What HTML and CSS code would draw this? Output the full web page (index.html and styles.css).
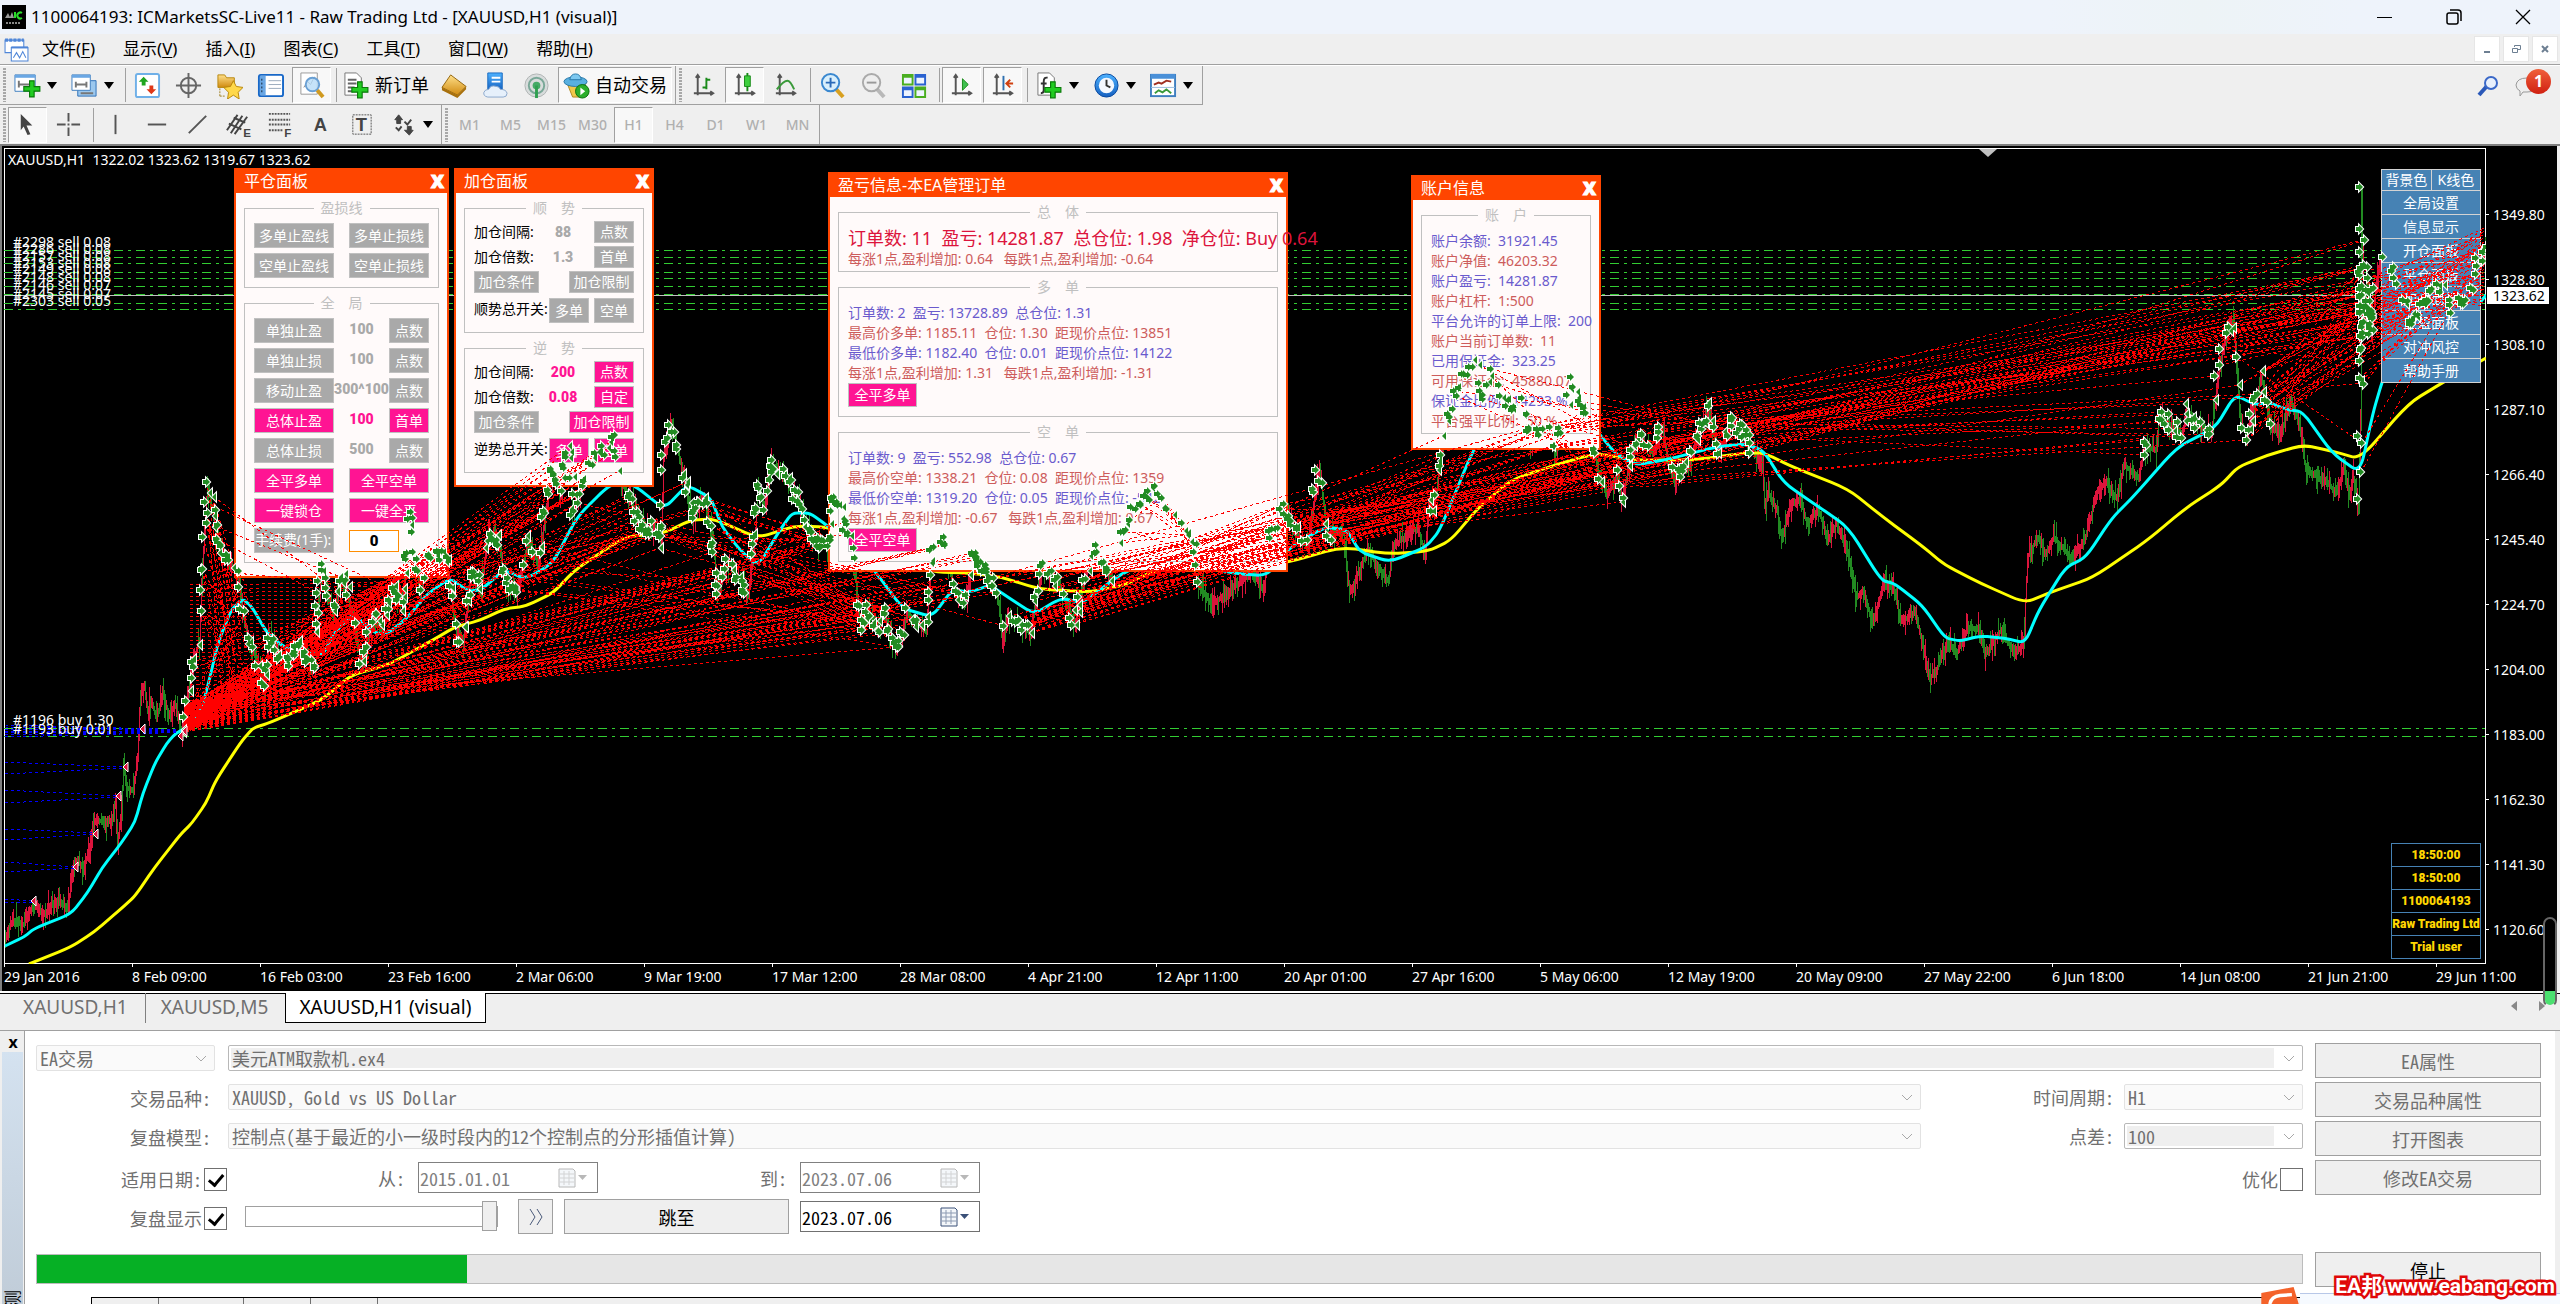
FILE: index.html
```html
<!DOCTYPE html>
<html lang="zh-CN">
<head>
<meta charset="utf-8">
<title>1100064193: ICMarketsSC-Live11 - Raw Trading Ltd</title>
<link rel="stylesheet" href="styles.css">
</head>
<body>
<svg class="defs" width="0" height="0" aria-hidden="true">
  <defs>
    <linearGradient id="gold" x1="0" y1="0" x2="0" y2="1"><stop offset="0" stop-color="#ffe08a"/><stop offset="1" stop-color="#d08a10"/></linearGradient>
    <linearGradient id="blue" x1="0" y1="0" x2="0" y2="1"><stop offset="0" stop-color="#4db2ff"/><stop offset="1" stop-color="#1560c0"/></linearGradient>
    <symbol id="plus" viewBox="0 0 16 16"><path d="M6 1h4v5h5v4h-5v5H6v-5H1V6h5z" fill="#22cc22" stroke="#0a7a0a"/></symbol>
    <symbol id="axes" viewBox="0 0 26 28"><path d="M7 3v21M3 22h20M5 6l2-3 2 3M20 20l3 2-3 2" fill="none" stroke="#555" stroke-width="2"/></symbol>
    <symbol id="chev" viewBox="0 0 12 8"><path d="M1 1l5 5 5-5" fill="none" stroke="#a8a8a8"/></symbol>
    <symbol id="cal" viewBox="0 0 32 20"><path d="M2 1h14l2 2v16H2z" fill="#f4f7fa" stroke="currentColor"/><path d="M3 6h14M3 10h14M3 14h14M7 3v14M12 3v14" stroke="currentColor" opacity=".55"/><path d="M21 7h9l-4.500 5z" fill="currentColor"/></symbol>
  </defs>
</svg>
<div class="app">
  <header class="titlebar">
    <svg class="logo" viewBox="0 0 24 24"><rect width="24" height="24" fill="#000"/><path d="M3 13l3-5 2 4 2-5 2 6z" fill="#999"/><path d="M13 7v6M20 8a3 3 0 1 0 0 5" stroke="#2bdc2b" stroke-width="2" fill="none"/><path d="M4 18h15" stroke="#888" stroke-width="2" stroke-dasharray="2 1"/></svg>
    <h1>1100064193: ICMarketsSC-Live11 - Raw Trading Ltd - [XAUUSD,H1 (visual)]</h1>
    <div class="winbtns">
      <button aria-label="最小化"><svg width="16" height="16"><path d="M0 8.500h15" stroke="#000"/></svg></button>
      <button aria-label="还原"><svg width="16" height="16" fill="none" stroke="#000" stroke-width="1.500"><rect x="1" y="4" width="11" height="11" rx="2"/><path d="M4 1h8q3 0 3 3v8"/></svg></button>
      <button aria-label="关闭"><svg width="16" height="16"><path d="M1 1l14 14M15 1L1 15" stroke="#000" stroke-width="1.300"/></svg></button>
    </div>
  </header>
  <nav class="menubar">
    <svg class="docicon" viewBox="0 0 24 24" fill="none" stroke="#4f86d8"><path d="M1 3h18v12H1z" fill="#fff"/><path d="M1 3h18" stroke-width="3" stroke-dasharray="3 1"/><path d="M7 10h16v13H7z" fill="#fff"/><path d="M7 10h16" stroke-width="2"/><path d="M9 20l3-5 3 5 3-6 3 6"/></svg>
    <a href="#">文件(<u>F</u>)</a><a href="#">显示(<u>V</u>)</a><a href="#">插入(<u>I</u>)</a><a href="#">图表(<u>C</u>)</a><a href="#">工具(<u>T</u>)</a><a href="#">窗口(<u>W</u>)</a><a href="#">帮助(<u>H</u>)</a>
    <div class="mdi">
      <button aria-label="最小化子窗口"><svg width="12" height="12"><path d="M3 9h6" stroke="#6d7f92" stroke-width="2"/></svg></button>
      <button aria-label="还原子窗口"><svg width="12" height="12" fill="none" stroke="#6d7f92"><path d="M4.500 4V2.500h6v4H8M2.500 5.500h5v4h-5z"/></svg></button>
      <button aria-label="关闭子窗口"><svg width="12" height="12"><path d="M3 3l6 6M9 3L3 9" stroke="#6d7f92" stroke-width="2"/></svg></button>
    </div>
  </nav>
  <div class="toolrow">
    <div class="toolbar">
      <i class="grip"></i>
      <button class="tb drop" aria-label="新图表"><svg viewBox="0 0 28 28"><path d="M1 3h21v17H1z" fill="#fff" stroke="#3f7fc0"/><path d="M1 3h21v3H1z" fill="#6aa7e4"/><path d="M5 9v7M5 13h12" stroke="#777" stroke-width="2"/><use href="#plus" x="9" y="8" width="19" height="19"/></svg></button>
      <button class="tb drop" aria-label="窗口"><svg viewBox="0 0 28 28"><path d="M7 9h19v16H7z" fill="#9cc8ee" stroke="#2f70b8"/><path d="M1 3h19v16H1z" fill="#fff" stroke="#3f7fc0"/><path d="M1 3h19v3H1z" fill="#6aa7e4"/><path d="M4 13h13M5 10v6M16 10v6M10 22h13" stroke="#777" stroke-width="2"/></svg></button>
      <i class="sep"></i>
      <button class="tb" aria-label="市场报价"><svg viewBox="0 0 28 28"><rect x="2" y="2" width="24" height="24" rx="2" fill="#fff" stroke="#6fb0e8" stroke-width="2"/><path d="M10 5l5 5h-3v4H8v-4H5z" fill="#1fa51f"/><path d="M18 23l5-5h-3v-4h-4v4h-3z" fill="#e03818"/></svg></button>
      <button class="tb" aria-label="准星"><svg viewBox="0 0 28 28" fill="none" stroke="#666" stroke-width="2"><circle cx="14" cy="14" r="8"/><path d="M14 1v26M1 14h26"/></svg></button>
      <button class="tb" aria-label="导航"><svg viewBox="0 0 28 28"><path d="M2 3h7l2 3h8v10H2z" fill="url(#gold)" stroke="#b8860b"/><path d="M4 17v8M4 25h6" stroke="#a08020" stroke-dasharray="2 1"/><path d="M18 9l3 6 7 1-5 5 1 7-6-4-6 4 1-7-5-5 7-1z" fill="#ffd84a" stroke="#b8860b"/></svg></button>
      <button class="tb" aria-label="终端"><svg viewBox="0 0 28 28"><rect x="2" y="3" width="25" height="22" rx="2" fill="#fff" stroke="#1868c8" stroke-width="2"/><path d="M3 4h6v20H3z" fill="#6aa7e4"/><path d="M5 7v15" stroke="#123" stroke-width="1" stroke-dasharray="2 2"/><path d="M12 9h13M12 13h13M12 17h13" stroke="#9ab"/></svg></button>
      <button class="tb on" aria-label="策略测试"><svg viewBox="0 0 28 28"><path d="M3 1h17v22H3z" fill="#fff" stroke="#999"/><path d="M6 16l4-6 3 3 4-8" stroke="#888" fill="none"/><circle cx="15" cy="13" r="7" fill="#b8dcf8" fill-opacity=".8" stroke="#6aa0d4" stroke-width="2"/><path d="M20 19l6 7" stroke="#d09a20" stroke-width="4"/></svg></button>
      <i class="sep"></i>
      <button class="tb text"><svg viewBox="0 0 28 28"><path d="M2 1h12l5 5v18H2z" fill="#fff" stroke="#777"/><path d="M5 8h9M5 12h9M5 16h7M5 20h5" stroke="#666" stroke-width="2"/><use href="#plus" x="8" y="9" width="19" height="19"/></svg>新订单</button>
      <button class="tb" aria-label="MetaEditor"><svg viewBox="0 0 28 28"><path d="M10 3l16 12-9 9L1 16z" fill="url(#gold)" stroke="#94650a"/><path d="M1 16l16 8 9-9v3l-9 9L1 19z" fill="#a8700c"/></svg></button>
      <button class="tb" aria-label="虚拟主机"><svg viewBox="0 0 28 28"><path d="M6 1h15v18H6z" fill="url(#blue)" stroke="#1a6ac0"/><path d="M10 6h9M10 10h9" stroke="#fff" stroke-width="2"/><path d="M6 26q-5-1-4-5 1-3 5-3 2-5 8-3 3 0 4 3 6 0 7 4 0 4-4 4z" fill="#e6f0fb" stroke="#8aa8cc"/></svg></button>
      <button class="tb" aria-label="信号"><svg viewBox="0 0 28 28" fill="none"><circle cx="14" cy="14" r="12" fill="#d8dcdc" stroke="#b0b4b4"/><circle cx="14" cy="14" r="8" stroke="#7aa898" stroke-width="2"/><circle cx="14" cy="14" r="4" fill="#4a6"/><path d="M14 14v13" stroke="#2ea050" stroke-width="3"/></svg></button>
      <button class="tb text on"><svg viewBox="0 0 28 28"><path d="M4 11h20l-6 15H10z" fill="#f0c84a" stroke="#b08820"/><ellipse cx="13" cy="10" rx="12" ry="5" fill="#58b0e0" stroke="#2878a8"/><path d="M7 8q1-6 6-6t6 6z" fill="#7cc8f0" stroke="#2878a8"/><circle cx="20" cy="20" r="7" fill="#2cae2c" stroke="#0a700a"/><path d="M18 16l5 4-5 4z" fill="#fff"/></svg>自动交易</button>
    </div>
    <div class="toolbar">
      <i class="grip"></i>
      <button class="tb" aria-label="柱状图"><svg viewBox="0 0 26 28"><use href="#axes"/><path d="M16 6v12M16 8h4M12 16h4" stroke="#1a8a1a" stroke-width="2"/></svg></button>
      <button class="tb on" aria-label="阴阳烛"><svg viewBox="0 0 26 28"><use href="#axes"/><path d="M16 1v19" stroke="#1a8a1a" stroke-width="2"/><path d="M13 4h6v11h-6z" fill="#3fd03f" stroke="#1a8a1a"/></svg></button>
      <button class="tb" aria-label="折线图"><svg viewBox="0 0 26 28"><use href="#axes"/><path d="M4 18q7-9 11-9 3 0 7 9" fill="none" stroke="#3a9a3a" stroke-width="2"/></svg></button>
      <i class="sep"></i>
      <button class="tb" aria-label="放大"><svg viewBox="0 0 28 28"><path d="M17 17l8 9" stroke="#d8a020" stroke-width="4"/><circle cx="12" cy="11" r="9" fill="#d8effc" stroke="#3a88d0" stroke-width="2"/><path d="M12 6v10M7 11h10" stroke="#2a6ab8" stroke-width="2"/></svg></button>
      <button class="tb" aria-label="缩小"><svg viewBox="0 0 28 28"><path d="M17 17l8 9" stroke="#b8b8b8" stroke-width="4"/><circle cx="12" cy="11" r="9" fill="#eee" stroke="#aaa" stroke-width="2"/><path d="M7 11h10" stroke="#999" stroke-width="2"/></svg></button>
      <button class="tb" aria-label="平铺"><svg viewBox="0 0 28 28"><path d="M1 2h12v12H1zM14 15h12v12H14z" fill="#4aae20"/><path d="M14 2h12v12H14zM1 15h12v12H1z" fill="#2a62d0"/><path d="M3 6h8v6H3zM16 6h8v6h-8zM3 19h8v6H3zM16 19h8v6h-8z" fill="#eef4ff"/></svg></button>
      <i class="sep"></i>
      <button class="tb on" aria-label="自动滚动"><svg viewBox="0 0 26 28"><use href="#axes"/><path d="M14 7l6 6-6 6z" fill="#3fc04f" stroke="#1a8a1a"/></svg></button>
      <button class="tb on" aria-label="图表平移"><svg viewBox="0 0 26 28"><use href="#axes"/><path d="M14 4v15" stroke="#3070b0" stroke-width="2"/><path d="M24 12h-6M21 8l-4 4 4 4" stroke="#d04010" stroke-width="2" fill="none"/></svg></button>
      <i class="sep"></i>
      <button class="tb drop" aria-label="技术指标"><svg viewBox="0 0 28 28"><path d="M2 1h12l5 5v18H2z" fill="#fff" stroke="#777"/><path d="M12 6q-4-1-4 4v9q0 3-3 3M5 12h6" fill="none" stroke="#333" stroke-width="2"/><use href="#plus" x="8" y="9" width="19" height="19"/></svg></button>
      <button class="tb drop" aria-label="周期"><svg viewBox="0 0 28 28"><circle cx="14" cy="14" r="12" fill="url(#blue)" stroke="#0a4aa0"/><circle cx="14" cy="14" r="8" fill="#f4f8ff"/><path d="M14 8v6l4 2" fill="none" stroke="#333" stroke-width="2"/></svg></button>
      <button class="tb drop" aria-label="模板"><svg viewBox="0 0 28 28"><rect x="1" y="3" width="25" height="22" fill="#fff" stroke="#3f7fc0" stroke-width="2"/><path d="M1 2h25v5H1z" fill="#4a90d8"/><path d="M4 13l5-2 3 1 5-3 5 1" stroke="#a03020" stroke-width="2" fill="none"/><path d="M1 16h25" stroke="#9bd"/><path d="M5 22l4-3 4 2 4-3 5 4" stroke="#3a9a3a" stroke-width="2" fill="none"/></svg></button>
    </div>
    <div class="toolend">
      <button aria-label="搜索"><svg width="22" height="22" viewBox="0 0 22 22"><path d="M2 20l8-9" stroke="#2a58b8" stroke-width="4"/><circle cx="14" cy="8" r="6" fill="#e8f0fc" stroke="#3a68c8" stroke-width="2"/></svg></button>
      <button class="chat" aria-label="消息"><svg width="26" height="24" viewBox="0 0 26 24"><path d="M12 4q10 0 10 7t-10 7H8l-3 4v-5q-4-2-4-6 1-7 11-7z" fill="#eee" stroke="#999"/></svg><b>1</b></button>
    </div>
  </div>
  <div class="toolrow second">
    <div class="toolbar">
      <i class="grip"></i>
      <button class="tb on" aria-label="光标"><svg viewBox="0 0 26 28"><path d="M6 3l12 12h-6l4 9-3 1-4-9-3 4z" fill="#444"/></svg></button>
      <button class="tb" aria-label="十字准线"><svg viewBox="0 0 26 28"><path d="M13 2v9M13 17v9M1 14h9M16 14h9M12 14h2" stroke="#555" stroke-width="2"/></svg></button>
      <i class="sep"></i>
      <button class="tb" aria-label="垂直线"><svg viewBox="0 0 26 28"><path d="M13 4v20" stroke="#555" stroke-width="2"/></svg></button>
      <button class="tb" aria-label="水平线"><svg viewBox="0 0 26 28"><path d="M4 14h19" stroke="#555" stroke-width="2"/></svg></button>
      <button class="tb" aria-label="趋势线"><svg viewBox="0 0 26 28"><path d="M4 23L22 5" stroke="#555" stroke-width="2"/></svg></button>
      <button class="tb" aria-label="等距通道"><svg viewBox="0 0 26 28"><path d="M1 20L12 4M5 23L17 5M9 24L22 6M3 13l13 6M8 7l12 5" stroke="#444" stroke-width="2"/><text x="18" y="27" font-size="12">E</text></svg></button>
      <button class="tb" aria-label="斐波纳契"><svg viewBox="0 0 26 28"><path d="M2 3h22M2 9h22M2 14h22M2 20h15" stroke="#555" stroke-width="2" stroke-dasharray="2 1"/><text x="18" y="27" font-size="12">F</text></svg></button>
      <button class="tb" aria-label="文字"><svg viewBox="0 0 26 28"><text x="6" y="21" font-size="19">A</text></svg></button>
      <button class="tb" aria-label="文本标签"><svg viewBox="0 0 26 28"><path d="M4 4h19v20H4z" fill="none" stroke="#555" stroke-dasharray="2 1"/><text x="7" y="21" font-size="19">T</text></svg></button>
      <button class="tb drop" aria-label="箭头"><svg viewBox="0 0 26 28"><path d="M8 4l4 5h-2v4H6V9H4zM19 25l4-5h-2v-4h-4v4h-3z" fill="#444" stroke="#444"/><path d="M5 17l3 3 3-4M14 11l3 3 4-5" fill="none" stroke="#444" stroke-width="2"/></svg></button>
    </div>
    <div class="toolbar tf">
      <i class="grip"></i>
      <button class="tb">M1</button><button class="tb">M5</button><button class="tb">M15</button><button class="tb">M30</button><button class="tb on">H1</button><button class="tb">H4</button><button class="tb">D1</button><button class="tb">W1</button><button class="tb">MN</button>
    </div>
  </div>

  <main class="chart">
    <div class="plot">
      <svg id="under" class="layer" viewBox="4 148 2482 816" preserveAspectRatio="none"></svg>
    </div>
    <div class="prices" id="prices"></div>
    <div class="dates" id="dates"></div>
    <p class="ohlc">XAUUSD,H1&nbsp; 1322.02 1323.62 1319.67 1323.62</p>
    <div id="orders"></div>
    <i class="shift"></i>

    <section class="panel close-panel">
      <header><h2>平仓面板</h2><button aria-label="关闭">X</button></header>
      <fieldset><legend>盈损线</legend>
        <div class="rows">
          <div class="r"><button class="w80">多单止盈线</button><button class="w80">多单止损线</button></div>
          <div class="r"><button class="w80">空单止盈线</button><button class="w80">空单止损线</button></div>
        </div>
      </fieldset>
      <fieldset><legend>全&emsp;局</legend>
        <div class="rows">
          <div class="r"><button class="w80">单独止盈</button><b>100</b><button class="w40">点数</button></div>
          <div class="r"><button class="w80">单独止损</button><b>100</b><button class="w40">点数</button></div>
          <div class="r"><button class="w80">移动止盈</button><b>300^100</b><button class="w40">点数</button></div>
          <div class="r"><button class="w80 hot">总体止盈</button><b class="hot">100</b><button class="w40 hot">首单</button></div>
          <div class="r"><button class="w80">总体止损</button><b>500</b><button class="w40">点数</button></div>
          <div class="r"><button class="w80 hot">全平多单</button><button class="w80 hot">全平空单</button></div>
          <div class="r"><button class="w80 hot">一键锁仓</button><button class="w80 hot">一键全平</button></div>
          <div class="r fee"><label class="w80 tag" for="fee">手续费(1手):</label><input id="fee" value="0"></div>
        </div>
      </fieldset>
    </section>

    <section class="panel add-panel">
      <header><h2>加仓面板</h2><button aria-label="关闭">X</button></header>
      <fieldset><legend>顺&emsp;势</legend>
        <div class="rows">
          <div class="r"><span>加仓间隔:</span><b>88</b><button class="w40">点数</button></div>
          <div class="r"><span>加仓倍数:</span><b>1.3</b><button class="w40">首单</button></div>
          <div class="r"><button class="w65">加仓条件</button><button class="w65">加仓限制</button></div>
          <div class="r tall"><span>顺势总开关:</span><button class="w40">多单</button><button class="w40">空单</button></div>
        </div>
      </fieldset>
      <fieldset><legend>逆&emsp;势</legend>
        <div class="rows">
          <div class="r"><span>加仓间隔:</span><b class="hot">200</b><button class="w40 hot">点数</button></div>
          <div class="r"><span>加仓倍数:</span><b class="hot">0.08</b><button class="w40 hot">自定</button></div>
          <div class="r"><button class="w65">加仓条件</button><button class="w65 hot">加仓限制</button></div>
          <div class="r tall"><span>逆势总开关:</span><button class="w40 hot">多单</button><button class="w40 hot">空单</button></div>
        </div>
      </fieldset>
    </section>

    <section class="panel pnl-panel">
      <header><h2>盈亏信息-本EA管理订单</h2><button aria-label="关闭">X</button></header>
      <fieldset class="sum"><legend>总&emsp;体</legend>
        <p class="big">订单数: 11&nbsp; 盈亏: 14281.87&nbsp; 总仓位: 1.98&nbsp; 净仓位: Buy 0.64</p>
        <p class="rose">每涨1点,盈利增加: 0.64&nbsp;&nbsp; 每跌1点,盈利增加: -0.64</p>
      </fieldset>
      <fieldset><legend>多&emsp;单</legend>
        <p>订单数: 2&nbsp; 盈亏: 13728.89&nbsp; 总仓位: 1.31</p>
        <p class="rose">最高价多单: 1185.11&nbsp; 仓位: 1.30&nbsp; 距现价点位: 13851</p>
        <p>最低价多单: 1182.40&nbsp; 仓位: 0.01&nbsp; 距现价点位: 14122</p>
        <p class="rose">每涨1点,盈利增加: 1.31&nbsp;&nbsp; 每跌1点,盈利增加: -1.31</p>
        <button class="hot">全平多单</button>
      </fieldset>
      <fieldset><legend>空&emsp;单</legend>
        <p>订单数: 9&nbsp; 盈亏: 552.98&nbsp; 总仓位: 0.67</p>
        <p class="rose">最高价空单: 1338.21&nbsp; 仓位: 0.08&nbsp; 距现价点位: 1359</p>
        <p>最低价空单: 1319.20&nbsp; 仓位: 0.05&nbsp; 距现价点位: -542</p>
        <p class="rose">每涨1点,盈利增加: -0.67&nbsp;&nbsp; 每跌1点,盈利增加: 0.67</p>
        <button class="hot">全平空单</button>
      </fieldset>
    </section>

    <section class="panel acc-panel">
      <header><h2>账户信息</h2><button aria-label="关闭">X</button></header>
      <fieldset><legend>账&emsp;户</legend>
        <p>账户余额:&nbsp; 31921.45</p><p class="rose">账户净值:&nbsp; 46203.32</p>
        <p>账户盈亏:&nbsp; 14281.87</p><p class="rose">账户杠杆:&nbsp; 1:500</p>
        <p>平台允许的订单上限:&nbsp; 200</p><p class="rose">账户当前订单数:&nbsp; 11</p>
        <p>已用保证金:&nbsp; 323.25</p><p class="rose">可用保证金:&nbsp; 45880.07</p>
        <p>保证金比例:&nbsp; 14293 %</p><p class="rose">平台强平比例:&nbsp; 50 %</p>
      </fieldset>
    </section>

    <div class="sidemenu">
      <div class="pair"><button>背景色</button><button>K线色</button></div>
      <button>全局设置</button><button>信息显示</button><button>开仓面板</button><button>平仓面板</button><button>加仓面板</button><button>止盈面板</button><button>对冲风控</button><button>帮助手册</button>
    </div>
    <ul class="status"><li>18:50:00</li><li>18:50:00</li><li>1100064193</li><li>Raw Trading Ltd</li><li>Trial user</li></ul>
    <div class="overplot"><svg id="over" class="layer" viewBox="4 148 2482 816" preserveAspectRatio="none"></svg></div>
  </main>

  <nav class="tabs">
    <a href="#">XAUUSD,H1</a><a href="#">XAUUSD,M5</a><a href="#" class="active">XAUUSD,H1 (visual)</a>
    <span class="arrows"><button aria-label="向左"><svg width="8" height="10"><path d="M7 0v10L1 5z" fill="#888"/></svg></button><button aria-label="向右"><svg width="8" height="10"><path d="M1 0v10l6-5z" fill="#888"/></svg></button></span>
  </nav>

  <section class="tester">
    <div class="rail"><button aria-label="关闭测试">x</button><div class="caption"><span>测试</span></div></div>
    <div class="body">
      <div class="cols">
        <form class="form">
          <div class="row"><span class="sel w179"><select disabled aria-label="类型"><option>EA交易</option></select><svg><use href="#chev"/></svg></span><span class="sel grow edit"><select disabled aria-label="EA"><option>美元ATM取款机.ex4</option></select><svg><use href="#chev"/></svg></span></div>
          <div class="row"><label class="lead" for="sym">交易品种:</label><span class="sel grow"><select id="sym" disabled><option>XAUUSD, Gold vs US Dollar</option></select><svg><use href="#chev"/></svg></span><label class="mid" for="per">时间周期:</label><span class="sel w179"><select id="per" disabled><option>H1</option></select><svg><use href="#chev"/></svg></span></div>
          <div class="row"><label class="lead" for="model">复盘模型:</label><span class="sel grow"><select id="model" disabled><option>控制点(基于最近的小一级时段内的12个控制点的分形插值计算)</option></select><svg><use href="#chev"/></svg></span><label class="mid" for="spread">点差:</label><span class="sel w179 edit"><select id="spread" disabled><option>100</option></select><svg><use href="#chev"/></svg></span></div>
          <div class="row dates-row"><label class="tick">适用日期:<input type="checkbox" checked></label><label class="from" for="d1">从:</label><span class="date off"><input id="d1" value="2015.01.01" disabled><svg><use href="#cal"/></svg></span><label class="to" for="d2">到:</label><span class="date off"><input id="d2" value="2023.07.06" disabled><svg><use href="#cal"/></svg></span><label class="tick right">优化<input type="checkbox"></label></div>
          <div class="row"><label class="tick">复盘显示<input type="checkbox" checked></label><input class="speed" type="range" aria-label="速度" value="100"><button type="button" class="step" aria-label="快进"><svg width="14" height="18" fill="none" stroke="#4a5a7a"><path d="M1 1l5 8-5 8M8 1l5 8-5 8"/></svg></button><button type="button" class="jump">跳至</button><span class="date"><input aria-label="跳至日期" value="2023.07.06"><svg><use href="#cal"/></svg></span></div>
          <progress max="100" value="19">19%</progress>
        </form>
        <div class="actions"><button disabled>EA属性</button><button disabled>交易品种属性</button><button disabled>打开图表</button><button disabled>修改EA交易</button><button class="stop">停止</button></div>
      </div>
      <nav class="subtabs"><a href="#">结果</a><a href="#">净值图</a><a href="#">报告</a><a href="#">日志</a></nav>
    </div>
  </section>
</div>
<div class="meter"><i></i></div>
<div class="ime"><svg viewBox="0 0 48 20"><path d="M2 7L40 0l6 20H2z" fill="#f4622a"/><path d="M12 20q2-9 12-10l14-1" fill="none" stroke="#fff" stroke-width="4"/></svg></div>
<p class="mark">EA邦 www.eabang.com</p>
<script src="chart.js"></script>
</body>
</html>
```
FILE: styles.css
```css
* { box-sizing: border-box; }
html, body { height: 100%; }
body { margin: 0; overflow: hidden; background: #efefef; color: #000; font: 14px/20px "Noto Sans", "Noto Sans CJK SC", sans-serif; position: relative; }
h1, h2, p, ul, fieldset { margin: 0; padding: 0; font-weight: 400; }
button, input, select { font: inherit; margin: 0; padding: 0; color: inherit; border-radius: 0; }
button { border: 0; background: none; }
a { color: inherit; text-decoration: none; }
.defs { position: absolute; }
.app { height: 100%; display: flex; flex-direction: column; }

.titlebar { display: flex; align-items: center; height: 34px; padding-left: 2px; gap: 5px; background: linear-gradient(90deg, #eef3fb 80%, #edf3f6 86%, #eef3fb 92%); flex: none; }
.titlebar h1 { font-size: 17px; line-height: 24px; flex: 1; }
.logo { width: 24px; height: 24px; }
.winbtns { display: flex; padding-right: 3px; }
.winbtns button { width: 69px; height: 32px; display: grid; place-items: center; }
.menubar { display: flex; align-items: center; height: 31px; flex: none; padding-left: 4px; font-size: 18px; border-bottom: 1px solid #a0a0a0; }
.docicon { width: 25px; height: 25px; margin-right: 13px; }
.menubar a { margin-right: 28px; font-size: 17px; }
.menubar u { text-underline-offset: 2px; }
.mdi { margin-left: auto; display: flex; gap: 3px; padding-right: 2px; }
.mdi button { width: 26px; height: 26px; background: #fff; border: 1px solid #e6e6e6; display: grid; place-items: center; }

.toolrow { display: flex; height: 40px; flex: none; border-top: 1px solid #fff; align-items: stretch; }
.second { border-top: 0; border-bottom: 2px solid #808080; height: 41px; }
.toolbar { display: flex; align-items: center; border-bottom: 1px solid #a0a0a0; border-right: 1px solid #a0a0a0; padding-right: 1px; }
.second .toolbar { border-bottom: 0; padding-right: 0; }
.grip { width: 3px; height: 34px; margin: 0 2px 0 3px; background: repeating-linear-gradient(#a8a8a8 0 2px, #efefef 2px 3px); }
.sep { width: 1px; height: 34px; margin: 0 2px 0 3px; background: #a0a0a0; }
.tb { width: 39px; height: 36px; margin-right: 2px; display: flex; align-items: center; justify-content: center; flex: none; }
.tb svg { width: 27px; height: 27px; }
.tb text { font-family: "Liberation Sans", sans-serif; font-weight: 700; fill: #444; }
.tb.on { background: #f8f8f8; border: 1px solid #fff; border-top-color: #a0a0a0; border-left-color: #a0a0a0; }
.tb.text { width: auto; font-size: 18px; gap: 5px; padding: 0 4px; }
.tb.drop { width: 55px; gap: 6px; }
.tb.drop::after { content: ""; border: 5px solid transparent; border-top: 7px solid #000; border-bottom: 0; }
.tf .tb { color: #b0b0b0; font-weight: 500; font-size: 14px; }
.second .tb.drop { width: 56px; }
.toolend { margin-left: auto; display: flex; align-items: center; gap: 16px; padding-right: 9px; }
.toolend button { display: flex; }
.chat { position: relative; padding-right: 10px; }
.chat b { position: absolute; right: 0; top: -5px; width: 25px; height: 25px; border-radius: 50%; background: linear-gradient(#f0603c, #d02010); color: #fff; line-height: 25px; text-align: center; font-size: 16px; }

.chart { position: relative; flex: 1; min-height: 0; background: #000; color: #fff; border-left: 2px solid #808080; border-right: 3px solid #efefef; display: grid; grid-template-columns: 1fr 71px; grid-template-rows: 1fr 27px; padding: 2px 0 0 2px; }
.plot { border: 1px solid #fff; position: relative; min-height: 0; }
.layer { position: absolute; inset: -1px; width: calc(100% + 2px); height: calc(100% + 2px); overflow: hidden; pointer-events: none; }
.overplot { position: absolute; left: 3px; top: 3px; right: 72px; bottom: 28px; pointer-events: none; }
.prices { position: relative; padding-top: 34px; }
.prices span { display: block; height: 65px; line-height: 65px; padding-left: 7px; background: linear-gradient(#fff, #fff) 0 32px / 3px 1px no-repeat; }
.prices b { position: absolute; left: 1px; top: 139px; width: 62px; line-height: 17px; background: #fff; color: #000; font-weight: 400; padding-left: 6px; }
.dates { grid-column: 1 / 3; display: flex; overflow: hidden; }
.dates span { flex: 0 0 128px; white-space: nowrap; line-height: 26px; background: linear-gradient(#fff, #fff) 0 0 / 1px 3px no-repeat; }
.ohlc { position: absolute; left: 6px; top: 4px; }
.order { position: absolute; left: 11px; white-space: nowrap; }
.shift { position: absolute; left: 1977px; top: 3px; border: 9px solid transparent; border-top: 8px solid #c0c0c0; border-bottom: 0; }

.panel { position: absolute; border: 2px solid #ff4500; background: #fffafa; color: #6a5acd; padding: 0 8px; }
.panel header { margin: -2px -10px 5px; height: 25px; padding: 0 5px 0 10px; background: #ff4500; color: #fff; display: flex; align-items: center; justify-content: space-between; }
.panel h2 { font-size: 16px; }
.panel header button { font: 900 18px/20px "Noto Sans", sans-serif; -webkit-text-stroke: 1px #fff; }
.panel fieldset { border: 1px solid #c0c0c0; min-width: 0; margin-bottom: 5px; padding: 0 9px; }
.panel legend { color: #c0c0c0; height: 20px; padding: 0 7px; margin: 0 auto; }
.panel p { white-space: nowrap; line-height: 20px; }
.panel fieldset button, .tag { background: #a9a9a9; color: #fff; border: 1px solid #c0c0c0; height: 25px; line-height: 22px; white-space: nowrap; overflow: hidden; }
.panel b { color: #a9a9a9; font: 900 14px/22px "Roboto", sans-serif; text-align: center; }
.panel b.hot { color: #ff1493; }
.panel fieldset button.hot { background: #ff1493; }
.rose { color: #cd5c5c; }
.rows { display: flex; flex-direction: column; gap: 5px; padding: 5px 0 9px; }
.r { display: flex; justify-content: space-between; }
.w80 { width: 80px; }
.w65 { width: 65px; }
.w40 { width: 40px; }
.close-panel b { width: 55px; overflow: hidden; display: flex; justify-content: center; }
.close-panel { left: 232px; top: 22px; width: 215px; padding-bottom: 8px; }
.fee { align-items: center; }
.fee input { width: 50px; height: 22px; margin-right: 30px; border: 1px solid #ff8c00; background: #fff; color: #000; text-align: center; font: 900 15px/20px "Roboto", sans-serif; }
.add-panel { left: 452px; top: 22px; width: 200px; padding-bottom: 7px; color: #000; }
.add-panel .rows { gap: 3px; padding: 3px 0 9px; }
.add-panel fieldset button { height: 22px; line-height: 20px; }
.add-panel b { width: 38px; margin-right: 12px; }
.add-panel span { width: 70px; white-space: nowrap; line-height: 22px; }
.add-panel .tall { padding-top: 2px; gap: 5px; }
.add-panel .tall button { height: 25px; }
.pnl-panel { left: 826px; top: 26px; width: 460px; padding-bottom: 3px; }
.pnl-panel fieldset { padding: 6px 9px 9px; }
.pnl-panel fieldset button { width: 69px; height: 24px; display: block; }
.pnl-panel .sum { padding: 4px 9px 3px; }
.pnl-panel .big { font-size: 18px; line-height: 24px; color: #dc143c; }
.pnl-panel .sum .rose { line-height: 18px; }
.acc-panel { left: 1409px; top: 29px; width: 190px; padding-bottom: 9px; }
.acc-panel fieldset { padding: 6px 9px 2px; }

.sidemenu { position: absolute; right: 76px; top: 23px; width: 100px; border: 1px solid #d3d3d3; background: #4682b4; color: #fff; }
.sidemenu button { display: block; width: 100%; height: 24px; border-top: 1px solid #d3d3d3; }
.sidemenu .pair { display: flex; }
.sidemenu .pair button { border-top: 0; height: 20px; }
.sidemenu .pair button + button { border-left: 1px solid #d3d3d3; }
.status { position: absolute; right: 76px; bottom: 32px; width: 90px; list-style: none; border: 1px solid #4682b4; color: #ffd700; font: 900 12px/22px "Roboto", sans-serif; white-space: nowrap; }
.status li + li { border-top: 1px solid #4682b4; }
.status li { display: flex; justify-content: center; }

.tabs { flex: none; display: flex; height: 40px; border-top: 2px solid #fff; border-bottom: 1px solid #a0a0a0; box-shadow: inset 0 1px #000; padding-left: 2px; color: #707070; font-size: 19px; line-height: 26px; }
.tabs a { height: 30px; padding: 1px 17px 0 15px; }
.tabs a:first-child { border-right: 1px solid #808080; padding-left: 21px; }
.tabs a.active { background: #fff; color: #000; border: 1px solid #000; border-top: 0; padding: 1px 14px 0 13px; }
.arrows { margin-left: auto; display: flex; gap: 20px; padding: 8px 14px 0 0; height: 24px; }
.arrows button { display: flex; }

.tester { flex: none; display: flex; font-family: "Noto Sans Mono CJK SC", "Noto Sans CJK SC", monospace; font-size: 18px; line-height: 24px; color: #707070; }
.rail { width: 24px; padding-left: 2px; display: flex; flex-direction: column; flex: none; }
.rail button { height: 21px; font: 700 16px/16px "Noto Sans", sans-serif; color: #000; }
.caption { flex: 1; background: linear-gradient(#d4e2f0, #c0ccd8); width: 21px; color: #000; overflow: hidden; position: relative; }
.caption span { position: absolute; top: 238px; writing-mode: vertical-rl; transform: rotate(180deg); font-size: 17px; line-height: 20px; text-orientation: sideways; }
.body { flex: 1; min-width: 0; background: #fff; border-left: 1px solid #a0a0a0; margin-right: 5px; }
.cols { display: flex; gap: 12px; padding: 7px 14px 0 11px; }
.form { flex: 1; min-width: 0; padding-bottom: 13px; }
.row { display: flex; align-items: center; height: 39px; }
.sel { position: relative; display: flex; height: 26px; border: 1px solid #e2e2e2; background: #fafafa; border-radius: 2px; }
.sel select { appearance: none; border: 0; background: none; width: 100%; padding: 0 3px; color: #707070; opacity: 1; line-height: 22px; }
.sel svg { position: absolute; right: 7px; top: 9px; width: 12px; height: 8px; pointer-events: none; }
.sel.edit { border-color: #b8b8b8; background: linear-gradient(#efefef, #efefef) 2px 2px / calc(100% - 30px) 20px no-repeat #fff; }
.w179 { width: 179px; flex: none; }
.grow { flex: 1; }
.row > .w179:first-child, .lead { margin-right: 13px; }
.lead { width: 179px; text-align: right; padding: 2px 4px 0 0; flex: none; }
.mid { width: 193px; margin-right: 10px; text-align: right; flex: none; }
.dates-row { margin-top: 3px; }
.tick { width: 191px; display: flex; justify-content: flex-end; align-items: center; gap: 2px; flex: none; padding-top: 3px; }
.tick.right { margin-left: auto; }
.tick input { appearance: none; width: 23px; height: 23px; border: 1px solid #707070; background: #fff; display: grid; place-items: center; }
.tick input:checked::after { content: ""; width: 6px; height: 12px; border: solid #000; border-width: 0 3px 3px 0; transform: rotate(40deg) translateY(-1px); }
.from { width: 178px; text-align: right; margin-right: 13px; }
.to { width: 189px; text-align: right; margin-right: 13px; }
.date { width: 180px; height: 31px; border: 1px solid #707070; background: #fff; display: flex; align-items: center; color: #000; flex: none; }
.date input { border: 0; background: none; width: 138px; padding-left: 1px; line-height: 22px; }
.date svg { width: 32px; height: 20px; color: #3a5078; }
.date.off { color: #808080; border-color: #808080; }
.date.off svg { color: #b8b8b8; }
.speed { appearance: none; width: 253px; height: 30px; margin: 0 20px 0 18px; background: none; }
.speed::-webkit-slider-runnable-track { height: 21px; border: 1px solid #a0a0a0; background: #fff; }
.speed::-webkit-slider-thumb { appearance: none; width: 15px; height: 30px; margin-top: -6px; background: #efefef; border: 1px solid #a0a0a0; }
.step, .jump { height: 35px; background: #efefef; border: 1px solid #a0a0a0; color: #000; margin-right: 11px; }
.step { width: 35px; display: grid; place-items: center; }
.jump { width: 225px; }
progress { appearance: none; display: block; width: 100%; height: 30px; margin-top: 18px; border: 1px solid #bcbcbc; background: #e6e6e6; }
progress::-webkit-progress-bar { background: #e6e6e6; }
progress::-webkit-progress-value { background: #06b025; }
.actions { width: 226px; flex: none; display: flex; flex-direction: column; gap: 4px; padding-top: 5px; }
.actions button { height: 35px; background: #efefef; border: 1px solid #a0a0a0; color: #707070; }
.actions .stop { margin-top: 53px; color: #000; }
.subtabs { display: flex; height: 7px; overflow: hidden; margin-left: 66px; border: 1px solid #000; border-width: 1px 0 0 1px; background: #efefef; }
.subtabs a { padding: 2px 15px 0; border-right: 1px solid #707070; flex: none; }

.meter { position: absolute; right: 3px; top: 917px; width: 14px; height: 90px; border: 2px solid #666; border-radius: 7px; overflow: hidden; border-bottom-color: transparent; }
.meter i { position: absolute; left: 0; right: 0; bottom: 0; height: 14px; background: #4be070; }
.ime { position: absolute; right: 0; bottom: 0; width: 304px; height: 16px; }
.ime::after { content: ""; position: absolute; left: 44px; right: 0; bottom: 0; height: 10px; background: #f6faff; border-top: 1px solid #b8c8e8; }
.ime svg { position: absolute; left: 0; bottom: 0; width: 48px; height: 17px; z-index: 1; }
.mark { position: absolute; right: 5px; bottom: 4px; z-index: 2; font: 700 21px/28px "Roboto", "Noto Sans CJK SC", sans-serif; color: #fff; -webkit-text-stroke: 5px #e00808; paint-order: stroke fill; white-space: nowrap; }
```
FILE: chart.js
```js
const parse = s => s.trim().split(/\s+/).map(p => p.split(',').map(Number));

// fast and slow moving averages
const fast = parse(`5,946 24,937 35,928 71,914 88,892 102,868 122,842 135,822 143,793 155,763 167,743 176,733 192,725 202,708 210,677 218,643
231,610 243,599 252,607 267,633 285,648 307,653 323,655 334,633 354,613 363,623 377,634 390,632 408,617 426,595 450,578 468,591 481,590 504,570 526,579 553,563 577,517 606,488 622,480 638,488 664,509 687,485 711,498 722,527 740,550 758,566 780,530 792,513 810,513 829,527
850,545 875,571 902,608 932,617 952,590 971,592 990,585 1009,598 1034,614 1061,598 1083,603 1122,573 1160,558 1200,565 1231,573 1267,576 1289,548 1325,527 1347,530 1360,552 1390,562 1426,547 1440,530 1473,450 1500,405 1550,392 1590,420 1600,435 1615,453 1635,465 1665,460
1716,447 1743,444 1763,450 1784,483 1816,505 1848,527 1881,580 1895,584 1922,605 1945,638 1960,641 1980,636 2004,638 2025,643 2039,610 2065,568 2086,557 2112,518 2133,497 2177,447 2215,428 2235,395 2256,405 2268,402 2285,409 2303,412 2332,453 2360,473 2373,413 2382,382 2400,335 2440,318 2470,315 2486,295`);
const slow = parse(`29,964 71,947 94,932 122,908 135,896 155,867 180,835 192,823 206,803 216,780 241,742 253,728 269,723 322,700 351,675 388,665 433,640 455,627 481,620 504,609 526,606 553,593 575,570 624,537 664,533 691,520 714,519 758,538 794,526 829,527
880,548 932,572 970,573 1001,577 1039,589 1089,592 1122,586 1149,573 1200,558 1250,567 1289,562 1341,547 1390,554 1429,551 1451,540 1478,508 1511,480 1549,467 1596,453 1632,460 1693,460 1746,453 1764,453 1793,467 1848,489 1883,517 1922,546 1945,565 1980,583 2025,603 2051,592 2092,578 2145,542 2186,508 2221,485 2238,467 2268,455 2303,445 2332,451 2360,459 2409,403 2447,380 2486,358`);

// price path
const price = parse(`5,940 13,920 24,925 33,905 45,915 50,905 60,900 68,910 72,880 76,860 84,868 90,850 95,820 105,822 113,820 116,800 118,845 122,810 124,765 127,788 134,790 138,757 141,692 145,688 148,712 152,700 157,720 163,692 169,716 176,705 182,735 184,722 189,693 193,663 200,640 202,587 205,533 208,485 214,517 218,540 225,557 234,567 240,580 243,613 249,640 260,665 265,695 269,635 278,650 289,663 298,647 316,667 318,613 323,563 330,600 334,617 341,577 347,590 356,633 363,668 374,617 383,630 394,587 403,607 410,517 421,597 428,553 446,557 457,633 464,640 472,573 481,593 489,532 499,543 506,583 517,595 528,543 539,563 548,500 554,467 560,497 571,433 573,513 589,467 613,440 622,483 638,517 647,530 656,527 662,543 664,457 672,422 682,467 693,517 705,497 714,543 718,590 729,563 749,593 756,533 758,483 765,507 772,464 783,473 798,500 814,543 830,547
834,493 853,550 861,627 869,610 880,633 883,610 897,652 908,613 927,633 932,557 946,543 954,590 965,603 975,555 990,577 998,593 1003,640 1009,617 1031,633 1042,567 1061,587 1075,625 1086,577 1094,550 1111,577 1124,533 1138,500 1155,493 1177,513 1185,530 1198,547 1199,585 1212,605 1231,590 1253,572 1264,592 1270,537 1286,503 1294,530 1308,547 1320,465 1327,533 1344,533 1350,593 1368,550 1389,582 1393,547 1418,527 1426,558 1429,500 1434,513 1445,430 1459,383 1476,363 1483,400 1496,363 1504,400 1518,417 1523,400 1531,443 1547,420 1556,453 1574,383 1590,427 1599,473 1608,495 1618,473 1622,500 1629,470 1637,438 1654,453 1663,429 1669,463 1675,480 1690,465 1699,433 1709,410 1719,453 1734,423 1751,443 1760,467 1763,457 1765,507 1769,493 1778,513 1782,540 1791,503 1801,500 1807,523 1819,510 1828,540 1837,523 1848,553 1857,598 1863,590 1873,623 1885,580 1895,593 1901,621 1916,613 1930,678 1936,673 1948,640 1957,653 1969,627 1980,630 1986,655 2001,630 2015,655 2024,643 2028,557 2038,537 2046,555 2054,537 2073,560 2086,537 2098,490 2106,482 2118,500 2124,465 2139,477 2145,447 2156,450 2160,415 2183,435 2187,407 2194,423 2212,433 2218,380 2227,330 2234,322 2241,420 2247,437 2262,377 2271,423 2280,437 2291,400 2300,423 2306,470 2323,480 2338,493 2344,465 2350,497 2353,473 2359,510 2361,413 2362,190 2364,320 2368,280 2372,335 2376,290 2380,262 2392,268 2400,285 2406,305 2412,328 2420,312 2430,300 2440,285 2450,310 2460,300 2470,305 2478,262 2484,255`);

// spans in which the robot was trading
const zones = [[182, 800], [804, 1110], [1120, 1200], [1266, 1330], [1429, 1600], [1618, 1752], [2144, 2147], [2157, 2272], [2358, 2486]];

let seed = 20160129;
const rnd = () => (seed = (seed * 1664525 + 1013904223) >>> 0) / 4294967296;
const pick = a => a[Math.floor(rnd() * a.length)];
const at = (list, x) => {
  let i = 1;
  while (i < list.length - 1 && list[i][0] < x) i++;
  const [a, b] = [list[i - 1], list[i]];
  return a[1] + (b[1] - a[1]) * (x - a[0]) / (b[0] - a[0]);
};
const path = (d, stroke, w = 1, extra = '') => `<path d="${d}" fill="none" stroke="${stroke}" stroke-width="${w}" ${extra}/>`;
// rounded polyline through the midpoints of the samples
const curve = l => {
  let d = 'M' + l[0].join(' ');
  for (let i = 1; i < l.length - 1; i++) {
    const [p, c, n] = [l[i - 1], l[i], l[i + 1]];
    const mix = (a, b) => (a[0] * .3 + b[0] * .7) + ' ' + (a[1] * .3 + b[1] * .7);
    d += 'L' + mix(p, c) + 'Q' + c.join(' ') + ' ' + mix(n, c);
  }
  return d + 'L' + l[l.length - 1].join(' ');
};

let up = '', down = '', arrows = '', tris = '';
const marks = [];
const arrow = (x, y) => { arrows += `M${x - 4} ${y - 2}h3v-2l4 4l-4 4v-2h-3z`; marks.push([x, y]); };
const tri = (x, y) => { tris += `M${x + 3} ${y - 4}v8l-4 -4z`; marks.push([x, y]); };
for (let x = 5; x < 2486; x++) {
  const a = at(price, x), b = at(price, x + 1);
  const y1 = Math.round(Math.min(a, b) - 2 - rnd() * rnd() * 18);
  const y2 = Math.round(Math.max(a, b) + 2 + rnd() * rnd() * 18);
  const s = `M${x}.5 ${y1}V${y2}`;
  if ((b < a) !== (rnd() < .25)) up += s; else down += s;
  if (!zones.some(z => x >= z[0] && x <= z[1])) continue;
  const sparse = x > 1000 ? .38 : .55;
  for (let y = Math.min(a, b); y <= Math.max(a, b); y += 10) {
    if (rnd() > sparse) continue;
    const yy = Math.round(y + (rnd() - .5) * 16), xx = x + Math.round((rnd() - .5) * 4);
    if (x > 2358 && x < 2364 && yy < 255) continue;
    if (rnd() < .75) arrow(xx, yy); else tri(xx, yy);
  }
}
[[2360, 187], [2360, 229], [2365, 240], [2360, 252], [2361, 350], [2360, 361], [2360, 378], [2364, 384]].forEach(p => arrow(...p));
for (let i = 0; i < 26; i++) arrow(Math.round(2359 + rnd() * 15), Math.round(265 + rnd() * 75));

// open-to-close connectors
let red = '';
const line = (a, b) => {
  if (!a || !b || b[0] - a[0] < 12) return;
  const slope = (b[1] - a[1]) / (b[0] - a[0]);
  if (a[0] < 380 && a[1] + slope * (Math.min(380, b[0]) - a[0]) < 580) return;
  red += `M${a[0]} ${Math.round(a[1])}L${b[0]} ${Math.round(b[1])}`;
};
const within = (x1, x2, y1 = 0, y2 = 2000) => marks.filter(m => m[0] >= x1 && m[0] <= x2 && m[1] >= y1 && m[1] <= y2);
const m1 = within(225, 660, 440), m2 = within(700, 1010, 540), m3 = within(990, 1110, 575), m4 = within(1429, 1750, 428), m4b = within(1270, 1330, 500);
for (let i = 0; i < 125; i++) line([184 + i % 3, 733 - i % 28], pick(m1));
for (let i = 0; i < 64; i++) line([186, 732 - i % 30], pick(m2));
for (let i = 0; i < 36; i++) line([190, 725 - i * 4], [228 + i * 5, 722 - i * 4]);
for (let i = 0; i < 70; i++) line(pick(within(192, 330)), pick(within(330, 700, 470)));
for (let i = 0; i < 30; i++) line(pick(within(200, 215)), [222 + i, 700 - i % 10 * 12]);
for (let i = 0; i < 32; i++) line(pick(within(480, 780, 500)), pick(within(700, 1010, 590)));
for (let i = 0; i < 14; i++) line(pick(within(660, 760, 470)), pick(within(760, 850, 520)));
for (let i = 0; i < 48; i++) line(pick(m3), pick(m4));
for (let i = 0; i < 16; i++) line(pick(m3), pick(m4b));
for (let i = 0; i < 14; i++) line(pick(within(1120, 1180)), pick(within(1160, 1200)));
for (let i = 0; i < 22; i++) line(pick(within(1266, 1330, 500)), pick(m4));
for (let i = 0; i < 20; i++) line(pick(within(1440, 1600)), pick(within(1500, 1750, 400)));
const m5 = within(1440, 1750, 420, 480);
for (let i = 0; i < 40; i++) line(pick(m5), pick(within(2359, 2380, 230, 345)));
for (let i = 0; i < 14; i++) line(pick(m5), pick(within(2144, 2272, 330)));
for (let i = 0; i < 42; i++) line(pick(within(2218, 2272, 330)), pick(within(2359, 2484, 240)));
for (let i = 0; i < 46; i++) line(pick(within(2359, 2400, 270)), [2484, 228 + i % 24 * 3.4]);
line([1640, 487], [2146, 438]); line([1640, 484], [2146, 440]); line([2230, 396], [2362, 383]);
line([1640, 424], [2362, 240]);

// blue connectors of the early buy orders
let blue = '', redtri = '';
[[762, 124, 767], [774, 124, 768], [790, 118, 796], [803, 118, 797], [829, 95, 833], [840, 95, 834], [862, 75, 867], [872, 75, 868], [899, 33, 901], [903, 33, 902]].forEach(([y, x, y2]) => blue += `M5 ${y}L${x} ${y2}`);
for (let y = 725; y < 739; y += 2) blue += `M5 ${y}L178 ${731 + (y - 731) / 4}`;
[[125, 767], [118, 796], [95, 834], [75, 867], [33, 901], [142, 729], [180, 736], [184, 731]].forEach(([x, y]) => redtri += `M${x + 3} ${y - 5}v10l-5 -5z`);

const levels = [250, 257, 263, 272, 278, 286, 294, 303, 309, 728, 736].map(y => `M4 ${y}.5H2486`).join('');
const crisp = 'shape-rendering="crispEdges"';
document.getElementById('under').innerHTML =
  path(levels, '#32cd32', 1, 'stroke-dasharray="9 5 3 5" ' + crisp) +
  path('M4 295.5H2486', '#c0c0c0', 1, crisp) +
  path(up, '#dc143c', 1, crisp) + path(down, '#228b22', 1, crisp) +
  path(curve(slow), '#ff0', 3) + path(curve(fast), '#0ff', 3) +
  path(blue, '#00f', 1, 'stroke-dasharray="3 3" ' + crisp);
document.getElementById('over').innerHTML =
  path(red, '#f00', 1, 'stroke-dasharray="3 3" ' + crisp) +
  `<path d="${arrows}${tris}" fill="#228b22" stroke="#fff" stroke-width="2" paint-order="stroke"/>` +
  `<path d="${redtri}" fill="#dc143c" stroke="#fff"/>`;

document.getElementById('prices').innerHTML =
  ['1349.80', '1328.80', '1308.10', '1287.10', '1266.40', '1245.40', '1224.70', '1204.00', '1183.00', '1162.30', '1141.30', '1120.60'].map(t => `<span>${t}</span>`).join('') + '<b>1323.62</b>';
document.getElementById('dates').innerHTML =
  ['29 Jan 2016', '8 Feb 09:00', '16 Feb 03:00', '23 Feb 16:00', '2 Mar 06:00', '9 Mar 19:00', '17 Mar 12:00', '28 Mar 08:00', '4 Apr 21:00', '12 Apr 11:00', '20 Apr 01:00', '27 Apr 16:00', '5 May 06:00', '12 May 19:00', '20 May 09:00', '27 May 22:00', '6 Jun 18:00', '14 Jun 08:00', '21 Jun 21:00', '29 Jun 11:00'].map(t => `<span>${t}</span>`).join('');
document.getElementById('orders').innerHTML =
  [['#2298 sell 0.08', 242], ['#2286 sell 0.08', 249], ['#2157 sell 0.08', 256], ['#2153 sell 0.08', 263], ['#2149 sell 0.08', 269], ['#2148 sell 0.08', 277], ['#2146 sell 0.07', 285], ['#2145 sell 0.07', 294], ['#2303 sell 0.05', 301], ['#1196 buy 1.30', 720], ['#1193 buy 0.01', 729]]
    .map(([t, y]) => `<span class="order" style="top:${y - 156}px">${t}</span>`).join('');
```
